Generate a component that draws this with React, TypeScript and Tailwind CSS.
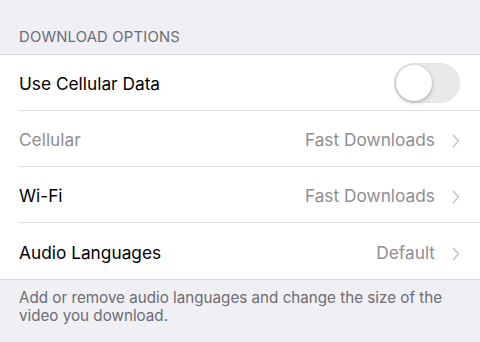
/** Download options settings group, iOS-style grouped table. */

type Row = {
  label: string;
  value?: string;
  muted?: boolean;
  toggle?: boolean;
};

const rows: Row[] = [
  { label: "Use Cellular Data", toggle: true },
  { label: "Cellular", value: "Fast Downloads", muted: true },
  { label: "Wi-Fi", value: "Fast Downloads" },
  { label: "Audio Languages", value: "Default" },
];

function Chevron() {
  return (
    <svg width="8" height="14" viewBox="0 0 8 14" fill="none" className="ml-[17px] mt-[2px]">
      <polyline
        points="1.5 1.5 6.5 7 1.5 12.5"
        stroke="#c7c7cc"
        strokeWidth="1.8"
        strokeLinecap="round"
        strokeLinejoin="round"
      />
    </svg>
  );
}

function Toggle() {
  return (
    <div className="relative h-[40px] w-[66px] rounded-full border border-[#e3e3e6] bg-[#e9e9ec]">
      <div className="absolute left-[1px] top-[1px] h-[36px] w-[36px] rounded-full bg-white shadow-[0_2px_4px_rgba(0,0,0,0.2),0_0_0_1px_rgba(0,0,0,0.06)]" />
    </div>
  );
}

export default function App() {
  return (
    <div
      className="h-[342px] w-[480px] overflow-hidden bg-[#efeff4]"
      style={{ fontFamily: '"Inter", "Liberation Sans", sans-serif' }}
    >
      <div className="px-[19px] pb-[8px] pt-[29px] text-[14.8px] leading-[17px] tracking-[0.2px] text-[#6d6d72]">
        DOWNLOAD OPTIONS
      </div>
      <div className="border-y border-[#dcdce0] bg-white">
        {rows.map((row, i) => (
          <div key={row.label} className="pl-[19px]">
            <div
              className={`flex h-[56px] items-center pr-[20px] pt-[3px] ${
                i < rows.length - 1 ? "border-b border-[#dcdce0]" : ""
              }`}
            >
              <span
                className={`flex-1 text-[17.3px] ${row.muted ? "text-[#8e8e93]" : "text-[#000000]"}`}
              >
                {row.label}
              </span>
              {row.toggle ? (
                <div className="-mt-[3px]">
                  <Toggle />
                </div>
              ) : (
                <>
                  <span className="text-[17.3px] text-[#8e8e93]">{row.value}</span>
                  <Chevron />
                </>
              )}
            </div>
          </div>
        ))}
      </div>
      <p className="px-[19px] pt-[9px] text-[15.2px] leading-[17.5px] text-[#6d6d72]">
        Add or remove audio languages and change the size of the video you download.
      </p>
    </div>
  );
}
